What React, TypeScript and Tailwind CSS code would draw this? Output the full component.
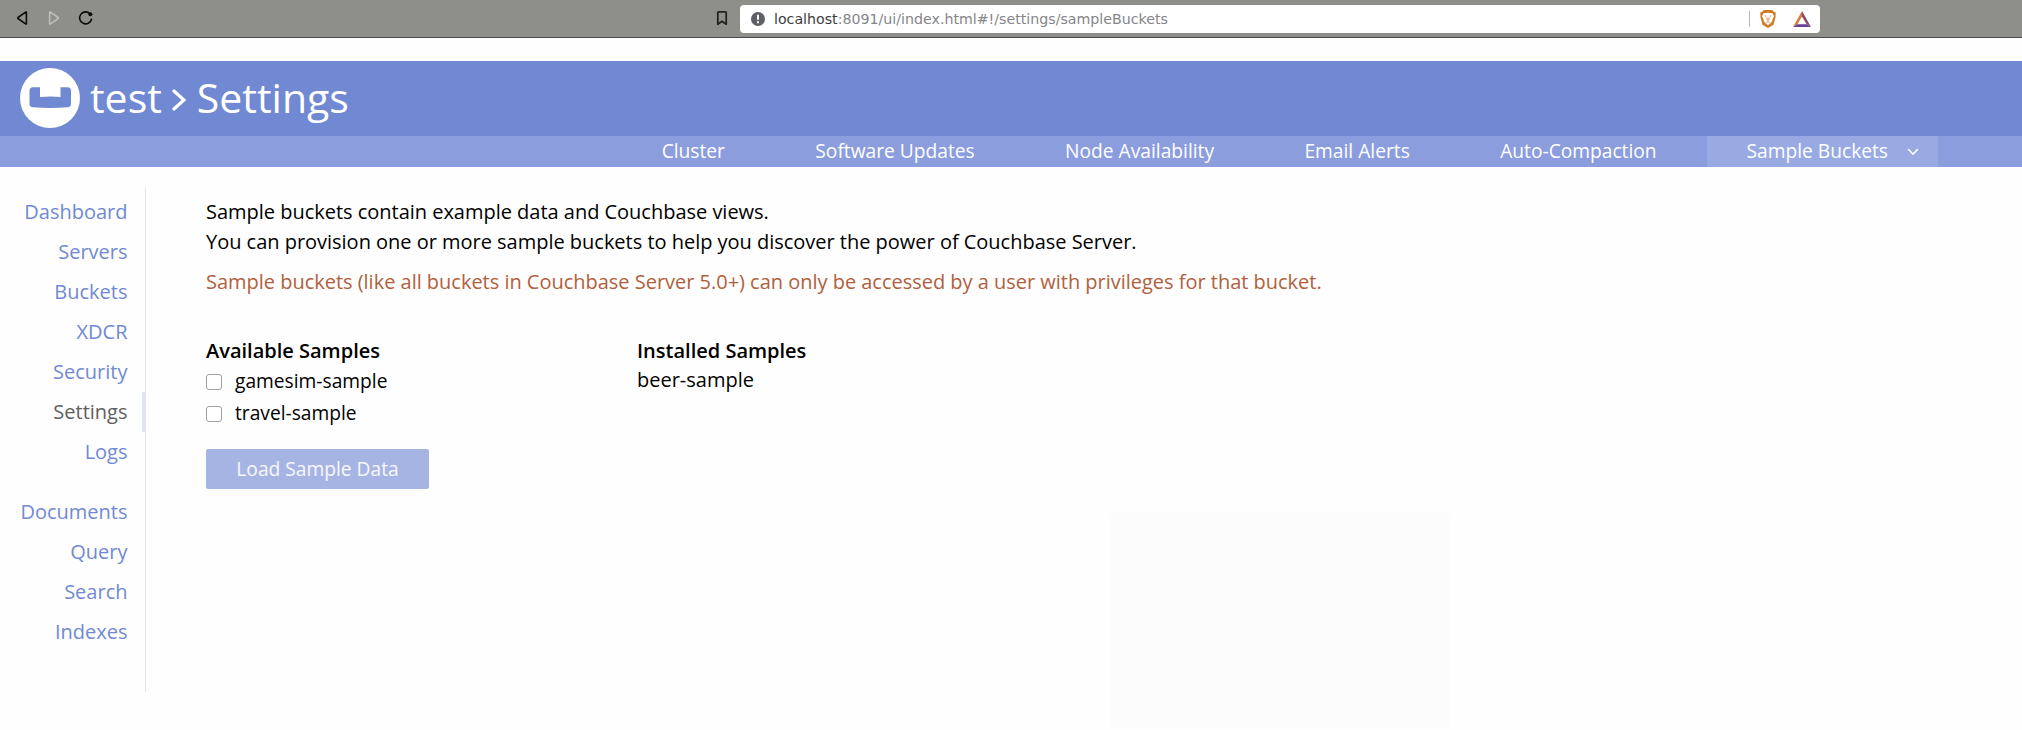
import React from "react";

const tabs = ["Cluster", "Software Updates", "Node Availability", "Email Alerts", "Auto-Compaction"];
const primary = ["Dashboard", "Servers", "Buckets", "XDCR", "Security", "Settings", "Logs"];
const secondary = ["Documents", "Query", "Search", "Indexes"];

function BrowserBar() {
  return (
    <div className="flex h-[38px] items-start border-b border-[#4a4a4a] bg-[#8e8f8a]">
      <svg className="mt-[10px] ml-[16px] h-4 w-[80px] shrink-0" viewBox="0 0 80 16" fill="none" strokeWidth="1.6" strokeLinejoin="round" strokeLinecap="round">
        <path d="M10.400 2.400v11.200q0 .8-.8.3L2 8.500q-.6-.5 0-1L9.600 2.100q.8-.5.8.3z" stroke="#0c0c0c" />
        <path d="M33.600 2.400v11.200q0 .8.8.3L42.200 8.500q.6-.5 0-1L34.400 2.100q-.8-.5-.8.3z" stroke="#bdbdba" />
        <path d="M75.500 9.200A6 6 0 1 1 74 3.700" stroke="#0c0c0c" />
        <circle cx="74.400" cy="4.200" r="2" fill="#0c0c0c" />
      </svg>
      <div className="w-[620px] shrink-0" />
      <svg className="mt-[10px] h-4 w-[12px] shrink-0" viewBox="0 0 12 16" fill="none" stroke="#222" strokeWidth="1.8" strokeLinejoin="round">
        <path d="M1.800 2.500q0-.7.7-.7h7q.7 0 .7.7v11.700L6 11.200l-4.200 3z" />
      </svg>
      <div className="mt-[5px] ml-[12px] flex h-7 w-[1080px] shrink-0 items-center rounded bg-white pr-[9px] pl-[11px] font-['DejaVu_Sans',sans-serif] text-[14.2px] text-[#85868a]">
        <svg className="h-[14px] w-[14px]" viewBox="0 0 14 14">
          <circle cx="7" cy="7" r="7" fill="#5f6065" />
          <path d="M6 2.800h2v5H6zM6 9.200h2v2H6z" fill="#fff" />
        </svg>
        <span className="ml-[9px] flex-1 pt-[2px] whitespace-nowrap">
          <span className="text-[#3c3d41]">localhost</span>:8091/ui/index.html#!/settings/sampleBuckets
        </span>
        <div className="h-4 w-px bg-[#b5b5b5]" />
        <svg className="ml-[10px] h-[18px] w-4" viewBox="0 0 16 18">
          <path d="M3.800 0h8.400l1.600 1.700 2 .8-.3 2.700.2 1.300-2.200 8.200L8 18l-5.500-3.300L.3 6.500l.2-1.300L.2 2.500l2-.8z" fill="#cf7a24" />
          <path d="M3.500 3.200L8 2.800l4.500.4L14 6l-1.500 3.500-.5 2.300L8 15.300l-4-3.500-.5-2.300L2 6z" fill="#fff" />
          <path d="M4.800 5.800l1.400.5M11.200 5.800l-1.400.5M7 7.500v2l1 .6 1-.6v-2M6.500 12.300L8 11.500l1.500.8" fill="none" stroke="#cf7a24" strokeWidth=".9" />
        </svg>
        <svg className="ml-[17px] h-4 w-[18px]" viewBox="0 0 18 16">
          <path d="M9 0L0 16l4.400-2.800L9 5.500z" fill="#dc7838" />
          <path d="M9 0l9 16-4.400-2.800L9 5.500z" fill="#8c4a66" />
          <path d="M0 16h18l-4.400-2.800H4.400z" fill="#67419a" />
        </svg>
      </div>
    </div>
  );
}

function NavItem({ label }: { label: string }) {
  const active = label === "Settings";
  return (
    <a className={active ? "block h-10 border-r-[3px] border-[#dfe4f5] pr-[14.5px] text-right leading-10 text-[#5f5f5f]" : "block h-10 pr-[17.5px] text-right leading-10 text-[#7189d3]"}>
      {label}
    </a>
  );
}

function SampleOption({ name }: { name: string }) {
  return (
    <label className="flex h-8 items-center text-[19.2px] leading-[30px]">
      <span className="mt-px h-4 w-4 rounded-[3px] border-[1.5px] border-[#a0a0a0] bg-white" />
      <span className="ml-[13px]">{name}</span>
    </label>
  );
}

export default function App() {
  return (
    <div className="relative h-[730px] w-[2022px] overflow-hidden bg-[#fefefe] font-['Open_Sans',sans-serif] text-[20px] text-black">
      <BrowserBar />
      <header className="mt-[23px]">
        <div className="flex h-[75px] items-center bg-[#7189d3] pl-5 text-[41px] text-white">
          <svg className="mt-[-1px] h-[60px] w-[60px]" viewBox="0 0 60 60">
            <circle cx="30" cy="30" r="30" fill="#fff" />
            <path d="M20 19.300v9.700q10-1 20.500 0v-9.700h7q3.500.3 3.500 3.500v13.200q0 3-3.500 3.300-17.300 1.500-34.500 0-3.500-.3-3.500-3.300v-13.200q0-3.200 3.500-3.500z" fill="#7189d3" />
          </svg>
          <span className="mt-[-2px] ml-[10px]">test</span>
          <svg className="mt-[3px] ml-[10px] h-[22px] w-[14px]" viewBox="0 0 14 22" fill="none" stroke="#fff" strokeWidth="3.200" strokeLinecap="round">
            <path d="M2 2l10 9L2 20" />
          </svg>
          <span className="mt-[-2px] ml-[11px]">Settings</span>
        </div>
        <nav className="flex h-[31px] items-center justify-end gap-[10.4px] bg-[#8b9ddd] pr-[84px] text-[19.2px] text-white">
          {tabs.map((t) => (
            <a key={t} className="px-10 pb-[2px] leading-[29px]">{t}</a>
          ))}
          <a className="flex h-full w-[231px] items-center bg-[#99aae2] pl-[39.5px]">
            <span className="pb-[2px] leading-[29px]">Sample Buckets</span>
            <svg className="ml-[19px] h-2 w-3" viewBox="0 0 12 8" fill="none" stroke="#fff" strokeWidth="1.600" strokeLinecap="round">
              <path d="M1.500 1.500L6 6l4.500-4.500" />
            </svg>
          </a>
        </nav>
      </header>
      <div className="flex pt-5">
        <aside className="h-[505px] w-[146px] shrink-0 border-r border-[#e6e6ea] pt-[5px]">
          {primary.map((n) => <NavItem key={n} label={n} />)}
          <div className="h-5" />
          {secondary.map((n) => <NavItem key={n} label={n} />)}
        </aside>
        <main className="pt-[10px] pl-[60px]">
          <p className="leading-[30px] tracking-[-0.018px]">
            Sample buckets contain example data and Couchbase views.
            <br />
            You can provision one or more sample buckets to help you discover the power of Couchbase Server.
          </p>
          <p className="mt-[10px] leading-[30px] tracking-[-0.018px] text-[#b1603d]">
            Sample buckets (like all buckets in Couchbase Server 5.0+) can only be accessed by a user with privileges for that bucket.
          </p>
          <div className="mt-[39px] flex">
            <section className="w-[431px]">
              <h2 className="mb-[-1px] leading-[30px] font-semibold">Available Samples</h2>
              <SampleOption name="gamesim-sample" />
              <SampleOption name="travel-sample" />
            </section>
            <section>
              <h2 className="mb-[-1px] leading-[30px] font-semibold">Installed Samples</h2>
              <p className="leading-[30px]">beer-sample</p>
            </section>
          </div>
          <button className="mt-5 h-10 w-[223px] rounded-[2px] bg-[#a6b4e4] text-[19.2px] text-white/90">Load Sample Data</button>
        </main>
      </div>
      <div className="absolute top-[511px] left-[1110px] h-[216px] w-[340px] rounded-t-lg bg-[#fcfcfc]" />
    </div>
  );
}
